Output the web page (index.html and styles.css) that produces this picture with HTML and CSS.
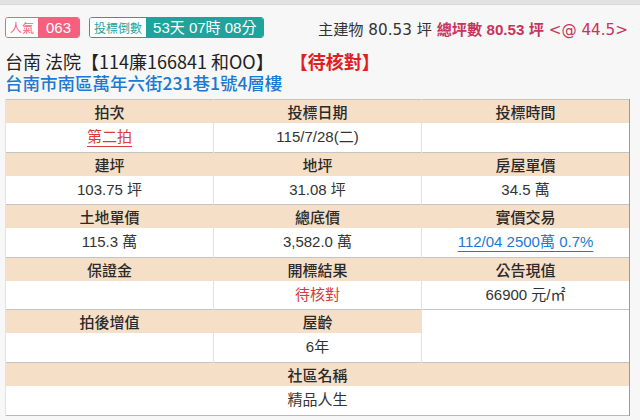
FILE: index.html
```html
<!DOCTYPE html>
<html lang="zh-Hant">
<head>
<meta charset="utf-8">
<link rel="stylesheet" href="styles.css">
</head>
<body>
<div class="topband"></div>
<div class="page">
  <div class="toprow">
    <div class="badges">
      <span class="badge pink"><span class="lbl">人氣</span><span class="val">063</span></span>
      <span class="badge teal"><span class="lbl">投標倒數</span><span class="val">53天 07時 08分</span></span>
    </div>
    <div class="area">主建物 80.53 坪 <b class="tot">總坪數 80.53 坪</b> <span class="at">&lt;@ 44.5&gt;</span></div>
  </div>
  <div class="title">台南 法院【114廉166841 和OO】 <span class="status">【待核對】</span></div>
  <div class="addr">台南市南區萬年六街231巷1號4層樓</div>
  <table class="info">
    <tr class="hd"><th>拍次</th><th>投標日期</th><th>投標時間</th></tr>
    <tr class="dt"><td><a class="red link">第二拍</a></td><td>115/7/28(二)</td><td></td></tr>
    <tr class="hd"><th>建坪</th><th>地坪</th><th>房屋單價</th></tr>
    <tr class="dt"><td>103.75 坪</td><td>31.08 坪</td><td>34.5 萬</td></tr>
    <tr class="hd"><th>土地單價</th><th>總底價</th><th>實價交易</th></tr>
    <tr class="dt"><td>115.3 萬</td><td>3,582.0 萬</td><td><a class="blue link">112/04 2500萬 0.7%</a></td></tr>
    <tr class="hd"><th>保證金</th><th>開標結果</th><th>公告現值</th></tr>
    <tr class="dt"><td></td><td><span class="red">待核對</span></td><td>66900 元/㎡</td></tr>
    <tr class="hd"><th>拍後增值</th><th>屋齡</th><td class="span2" rowspan="2"></td></tr>
    <tr class="dt"><td></td><td>6年</td></tr>
    <tr class="hd"><th colspan="3">社區名稱</th></tr>
    <tr class="dt"><td colspan="3">精品人生</td></tr>
  </table>
</div>
</body>
</html>
```
FILE: styles.css
```css
html, body {
  margin: 0;
  padding: 0;
}
body {
  background: #f7f7f7;
  font-family: "Noto Sans CJK TC", "Noto Sans", sans-serif;
  color: #333;
  width: 640px;
  height: 420px;
  overflow: hidden;
}
.topband {
  height: 4px;
  background: #e2e2e2;
  border-bottom: 1px solid #d8d8d8;
}
.page {
  padding: 0 0 0 5px;
  width: 625px;
}
.toprow {
  display: flex;
  align-items: center;
  margin-top: 12px;
  height: 21px;
}
.badges {
  display: flex;
  gap: 9px;
}
.badge {
  display: inline-flex;
  height: 21px;
  box-sizing: border-box;
  border-radius: 3px;
  overflow: hidden;
  line-height: 19px;
}
.badge .lbl {
  background: #fff;
  font-size: 12px;
  padding: 0 4px;
}
.badge .val {
  font-size: 15px;
  color: #fff;
  padding: 0 7px;
  font-family: "Liberation Sans", "Noto Sans CJK TC", sans-serif;
}
.pink { border: 1px solid #f4607e; }
.pink .lbl { color: #f4607e; }
.pink .val { background: #f4607e; padding: 0 8px; }
.teal { border: 1px solid #1fa39b; }
.teal .lbl { color: #1fa39b; }
.teal .val { background: #1fa39b; }
.area {
  margin-left: auto;
  margin-right: 2px;
  font-size: 15.2px;
  font-family: "DejaVu Sans", "Noto Sans CJK TC", sans-serif;
  color: #333;
  white-space: nowrap;
}
.area .tot {
  color: #c8345c;
  font-weight: 700;
  font-family: "Liberation Sans", "Noto Sans CJK TC", sans-serif;
}
.area .at {
  color: #c8345c;
}
.title {
  font-size: 18px;
  line-height: 22px;
  margin-top: 12px;
  color: #222;
  white-space: nowrap;
}
.status {
  color: #e02020;
  font-weight: 700;
  margin-left: 12px;
}
.addr {
  font-size: 17.5px;
  line-height: 22px;
  color: #1a7ad4;
  font-weight: 500;
  white-space: nowrap;
}
.info {
  margin-top: 5px;
  width: 625px;
  border-collapse: collapse;
  table-layout: fixed;
  background: #fff;
  border: 1px solid #b8b8b8;
  border-right-color: #9a9a9a;
  font-size: 15px;
  font-family: "Liberation Sans", "Noto Sans CJK TC", sans-serif;
}
.info th, .info td {
  text-align: center;
  padding: 0;
  border-left: 1px solid #e2e2e2;
  border-right: 1px solid #e2e2e2;
}
.info tr > :last-child {
  border-right: 1px solid #9a9a9a;
}
.info .hd th {
  background: #f5dfc6;
  font-weight: 500;
  font-family: "Noto Sans CJK TC", sans-serif;
  height: 23px;
  line-height: 23px;
  color: #2a2a2a;
}
.info .hd {
  border-top: 1px solid #c4c4c4;
}
.info .dt td {
  height: 28.6px;
  line-height: 28.6px;
  color: #333;
}
.info td.span2 {
  background: #fff;
  border-top: 1px solid #c4c4c4;
}
.red { color: #d93b3b; }
.blue { color: #1a7ad4; }
.link {
  text-decoration: underline;
  text-underline-offset: 4px;
  text-decoration-thickness: 1px;
}
```
